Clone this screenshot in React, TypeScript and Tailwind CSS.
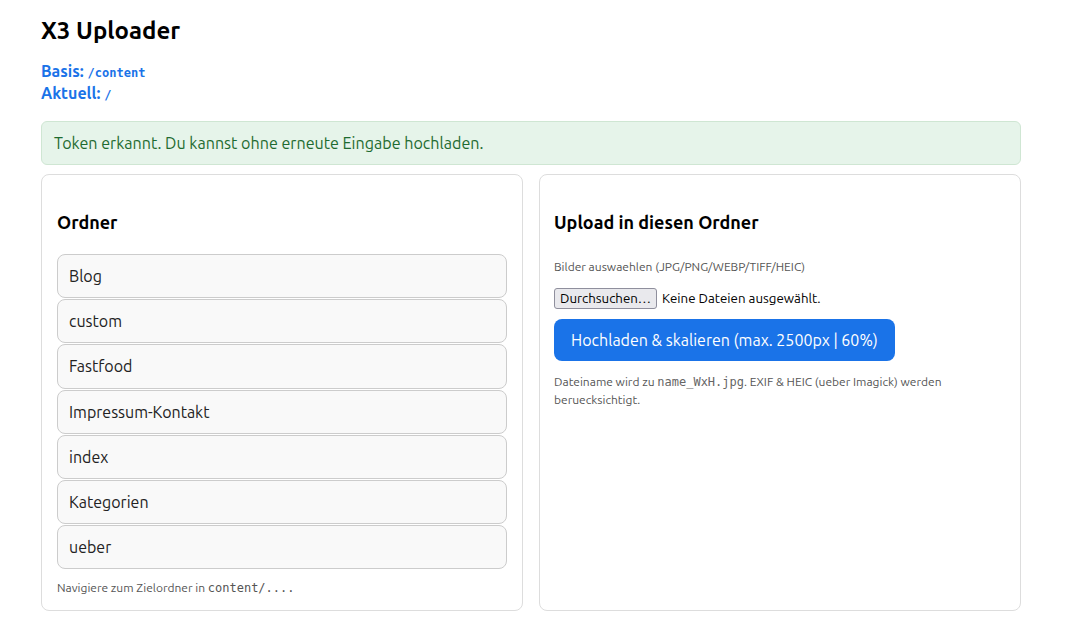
const folders = ["Blog", "custom", "Fastfood", "Impressum-Kontakt", "index", "Kategorien", "ueber"];

const sans = "font-['Ubuntu','Noto_Sans','Open_Sans',sans-serif]";
const mono = "font-['DejaVu_Sans_Mono','Liberation_Mono',monospace]";

export default function App() {
  return (
    <main className={`min-h-screen bg-white px-[41px] pt-[15px] text-black ${sans}`}>
      <div className="w-[980px]">
        <h1 className="text-[24px] font-bold leading-[32px]">X3 Uploader</h1>

        <div className="mt-[13px] text-[16px] font-bold text-[#1a73e8]">
          <div className="h-[22px] leading-[22px]">
            Basis: <code className={`${mono} text-[12px] font-bold leading-none`}>/content</code>
          </div>
          <div className="h-[22px] leading-[22px]">
            Aktuell: <code className={`${mono} text-[12px] font-bold leading-none`}>/</code>
          </div>
        </div>

        {/* Token-Hinweis */}
        <div className="mt-[17px] flex h-[44px] items-center rounded-[6px] border border-[#cfe6d3] bg-[#e6f4ea] px-[12px] text-[16.1px] text-[#1e6b30]">
          Token erkannt. Du kannst ohne erneute Eingabe hochladen.
        </div>

        <div className="mt-[9px] grid grid-cols-2 gap-[16px]">
          {/* Ordner */}
          <section className="flex h-[437px] flex-col rounded-[8px] border border-[#ddd] px-[15px] pt-[35px]">
            <h2 className="text-[18px] font-bold leading-[24px]">Ordner</h2>
            <ul className="mt-[20px] flex flex-col gap-[1px]">
              {folders.map((f) => (
                <li
                  key={f}
                  className="flex h-[44.2px] items-center rounded-[8px] border border-[#ccc] bg-[#f9f9f9] px-[11px] text-[16px] text-[#222]"
                >
                  {f}
                </li>
              ))}
            </ul>
            <p className="mt-[10px] text-[12px] leading-[18px] text-[#555]">
              Navigiere zum Zielordner in <code className={`${mono} text-[12px]`}>content/....</code>
            </p>
          </section>

          {/* Upload */}
          <section className="flex h-[437px] flex-col rounded-[8px] border border-[#ddd] px-[14px] pt-[35px]">
            <h2 className="text-[18px] font-bold leading-[24px]">Upload in diesen Ordner</h2>
            <p className="mt-[24px] text-[12px] leading-[18px] text-[#555]">
              Bilder auswaehlen (JPG/PNG/WEBP/TIFF/HEIC)
            </p>
            <div className="mt-[12px] flex items-center gap-[5px] text-[13.3px]">
              <button className="h-[21px] rounded-[3px] border border-[#8f8f9d] bg-[#e9e9ed] px-[5px] leading-[19px] text-black">
                Durchsuchen…
              </button>
              <span>Keine Dateien ausgewählt.</span>
            </div>
            <div className="mt-[10px]">
              <button className="h-[42px] w-[341px] rounded-[8px] bg-[#1a73e8] text-[16px] text-white">
                Hochladen &amp; skalieren (max. 2500px | 60%)
              </button>
            </div>
            <p className="mt-[12px] text-[12px] leading-[18px] text-[#555]">
              Dateiname wird zu <code className={`${mono} text-[12px] leading-none text-[#666]`}>name_WxH.jpg</code>. EXIF
              &amp; HEIC (ueber Imagick) werden beruecksichtigt.
            </p>
          </section>
        </div>
      </div>
    </main>
  );
}
